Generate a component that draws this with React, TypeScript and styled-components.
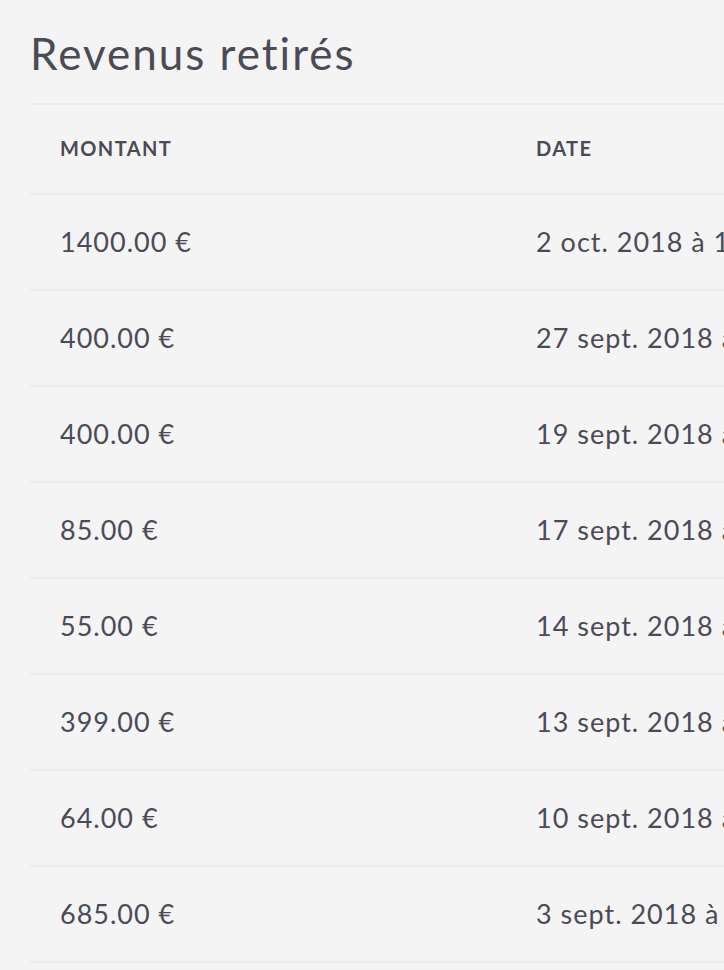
import React from 'react';
import styled, {createGlobalStyle} from 'styled-components';

const GlobalStyle = createGlobalStyle`
  html, body {
    margin: 0;
    padding: 0;
    background: #f4f4f4;
  }
  body {
    font-family: Lato, "Open Sans", sans-serif;
    font-variant-ligatures: none;
    color: #4b4b57;
    overflow: hidden;
  }
`;

const Page = styled.div`
  padding: 27px 0 0 30px;
  overflow: hidden;
`;

const Title = styled.h1`
  margin: 0;
  padding-bottom: 23px;
  font-size: 44px;
  font-weight: 400;
  line-height: 53px;
  letter-spacing: 2px;
  color: #4b4b57;
  border-bottom: 2px solid #ececf0;
`;

const Table = styled.div`
  width: 1000px;
`;

// height + padding-bottom + border = 90 for the header, 96 for a row
const Row = styled.div<{header?: boolean}>`
  display: grid;
  grid-template-columns: 476px 1fr;
  align-items: center;
  height: ${p => (p.header ? '86px' : '92px')};
  padding: 0 0 2px 30px;
  border-bottom: 2px solid #ececf0;
  white-space: nowrap;
`;

const HeadCell = styled.div`
  font-size: 20px;
  font-weight: 700;
  letter-spacing: 1.4px;
  text-transform: uppercase;
`;

const Cell = styled.div`
  font-size: 27px;
  font-weight: 400;
  letter-spacing: 1px;
`;

const rows = [
    {amount: '1400.00 €', date: '2 oct. 2018 à 19:42'},
    {amount: '400.00 €', date: '27 sept. 2018 à 10:15'},
    {amount: '400.00 €', date: '19 sept. 2018 à 16:03'},
    {amount: '85.00 €', date: '17 sept. 2018 à 09:27'},
    {amount: '55.00 €', date: '14 sept. 2018 à 18:51'},
    {amount: '399.00 €', date: '13 sept. 2018 à 11:36'},
    {amount: '64.00 €', date: '10 sept. 2018 à 14:08'},
    {amount: '685.00 €', date: '3 sept. 2018 à 08:55'},
];

export default function App() {
    return (
        <Page>
            <GlobalStyle/>
            <Title>Revenus retirés</Title>
            <Table>
                <Row header>
                    <HeadCell>Montant</HeadCell>
                    <HeadCell>Date</HeadCell>
                </Row>
                {rows.map((r, i) => (
                    <Row key={i}>
                        <Cell>{r.amount}</Cell>
                        <Cell>{r.date}</Cell>
                    </Row>
                ))}
            </Table>
        </Page>
    );
}
